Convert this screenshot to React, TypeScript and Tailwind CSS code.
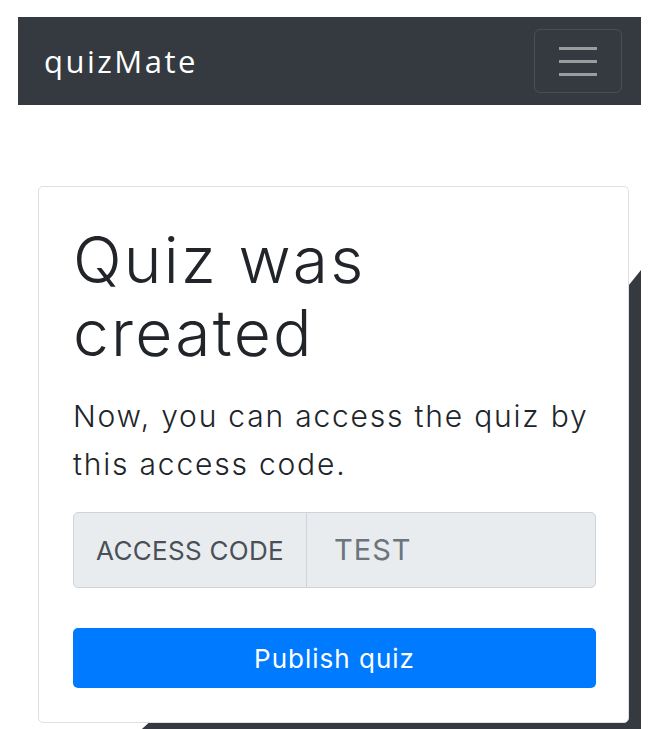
import React from 'react';

const Navbar: React.FC = () => (
  <nav className="flex h-[88px] items-center justify-between bg-[#343a40] pl-[26px] pr-[19px]">
    <a className="text-[31px] tracking-[2.5px] text-white [font-family:'Open_Sans',sans-serif]">quizMate</a>
    <button className="flex h-[64px] w-[88px] flex-col items-center justify-center gap-[10px] rounded-[6px] border border-white/10">
      <span className="h-[3px] w-[38px] bg-white/50" />
      <span className="h-[3px] w-[38px] bg-white/50" />
      <span className="h-[3px] w-[38px] bg-white/50" />
    </button>
  </nav>
);

export default function App() {
  return (
    <div className="min-h-screen bg-white pl-[18px] pr-[17px] pt-[17px] text-[#212529] [font-family:Inter,'Noto_Sans',sans-serif]">
      <Navbar />
      <div className="relative mt-[81px] pl-[20px] pr-[12px]">
        {/* dark slanted backdrop behind the card */}
        <div className="absolute right-0 left-[114px] top-[84px] -bottom-[20px] bg-[#343a40] [clip-path:polygon(100%_0,100%_100%,0_100%,2%_97%,97%_4%)]" />
        <div className="relative rounded-[5px] border border-[#dfdfdf] bg-white pl-[34px] pr-[30px] pb-[34px] pt-[36px]">
          <h1 className="text-[64px] font-light leading-[73px] tracking-[2.3px]">Quiz was created</h1>
          <p className="mt-[23px] text-[30px] font-light leading-[48px] tracking-[1.8px] text-[#212529]">
            Now, you can access the quiz by this access code.
          </p>
          <div className="mr-[2px] mt-[24px] flex h-[76px] rounded-[5px] border border-[#ced4da] bg-[#e9ecef]">
            <span className="flex w-[233px] items-center justify-center border-r border-[#ced4da] text-[26px] tracking-[0.3px] text-[#495057]">
              ACCESS CODE
            </span>
            <span className="flex items-center pl-[27px] text-[29px] tracking-[1px] text-[#6c757d]">TEST</span>
          </div>
          <button className="mt-[40px] flex h-[60px] w-[calc(100%-2px)] items-center justify-center rounded-[5px] bg-[#007bff] text-[26px] tracking-[1px] text-white">
            Publish quiz
          </button>
        </div>
      </div>
    </div>
  );
}
